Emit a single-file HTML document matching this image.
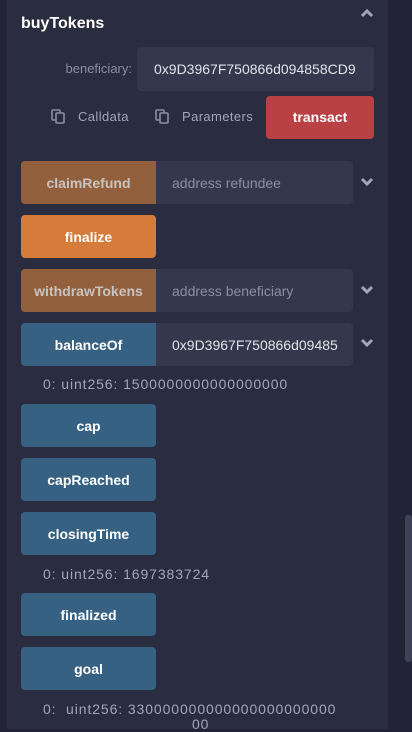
<!DOCTYPE html>
<html><head><style>
*{box-sizing:border-box;margin:0;padding:0}
body{width:412px;height:729px;overflow:hidden;background:#222336;font-family:"Liberation Sans",sans-serif;position:relative}
.panel{position:absolute;left:7px;top:0;width:381px;height:729px;background:#2a2c3f}
.a{position:absolute}
.btn{position:absolute;left:21px;width:135px;height:43px;border-radius:4px;color:#fff;font-weight:bold;font-size:14px;display:flex;align-items:center;justify-content:center}
.blue{background:#366182}
.or{background:#93603d;color:#c9c3c0;border-radius:4px 0 0 4px}
.inp{position:absolute;left:156px;width:197px;height:43px;background:#35384c;border-radius:0 4px 4px 0;color:#8a8ea6;font-size:14px;padding-left:16px;display:flex;align-items:center;overflow:hidden;white-space:nowrap}
.out{position:absolute;left:43px;color:#a2a6ba;font-size:14px;letter-spacing:0.9px}
.chev{position:absolute;left:360px;width:14px;height:14px}
</style></head><body>
<div class="panel"></div>
<div class="a" style="left:405px;top:515px;width:7px;height:147px;background:#3e4157;border-radius:3px"></div>
<div class="a" style="left:21px;top:15px;color:#fff;font-weight:bold;font-size:16px">buyTokens</div>
<svg class="chev" style="top:6px" viewBox="0 0 14 14"><path d="M2 10 L7 5 L12 10" stroke="#a2a6ba" stroke-width="3" fill="none"/></svg>
<div class="a" style="left:40px;top:61px;width:92px;text-align:right;color:#8a8ea6;font-size:13px">beneficiary:</div>
<div class="a" style="left:137px;top:47px;width:237px;height:44px;background:#35384c;border-radius:4px;color:#e0e2ea;font-size:14px;padding-left:17px;line-height:44px;overflow:hidden;white-space:nowrap">0x9D3967F750866d094858CD9</div>
<svg class="a" style="left:51px;top:109px" width="14" height="15" viewBox="0 0 14 15"><rect x="1" y="1" width="8" height="10" rx="1" stroke="#8a8ea6" stroke-width="1.6" fill="none"/><rect x="5" y="4" width="8" height="10" rx="1" stroke="#8a8ea6" stroke-width="1.6" fill="#2a2c3f"/></svg>
<div class="a" style="left:78px;top:109px;color:#a2a6ba;font-size:13px;letter-spacing:0.4px">Calldata</div>
<svg class="a" style="left:155px;top:109px" width="14" height="15" viewBox="0 0 14 15"><rect x="1" y="1" width="8" height="10" rx="1" stroke="#8a8ea6" stroke-width="1.6" fill="none"/><rect x="5" y="4" width="8" height="10" rx="1" stroke="#8a8ea6" stroke-width="1.6" fill="#2a2c3f"/></svg>
<div class="a" style="left:182px;top:109px;color:#a2a6ba;font-size:13px;letter-spacing:0.4px">Parameters</div>
<div class="a" style="left:266px;top:96px;width:108px;height:43px;background:#b94043;border-radius:4px;color:#fff;font-weight:bold;font-size:14px;line-height:43px;text-align:center">transact</div>

<div class="btn or" style="top:161px">claimRefund</div>
<div class="inp" style="top:161px">address refundee</div>
<svg class="chev" style="top:175px" viewBox="0 0 14 14"><path d="M2 4 L7 9 L12 4" stroke="#a2a6ba" stroke-width="3" fill="none"/></svg>

<div class="btn" style="top:215px;background:#d57c3a">finalize</div>

<div class="btn or" style="top:269px">withdrawTokens</div>
<div class="inp" style="top:269px">address beneficiary</div>
<svg class="chev" style="top:283px" viewBox="0 0 14 14"><path d="M2 4 L7 9 L12 4" stroke="#a2a6ba" stroke-width="3" fill="none"/></svg>

<div class="btn blue" style="top:323px;border-radius:4px 0 0 4px">balanceOf</div>
<div class="inp" style="top:323px;color:#e0e2ea">0x9D3967F750866d09485</div>
<svg class="chev" style="top:336px" viewBox="0 0 14 14"><path d="M2 4 L7 9 L12 4" stroke="#a2a6ba" stroke-width="3" fill="none"/></svg>
<div class="out" style="top:376px">0: uint256: 1500000000000000000</div>

<div class="btn blue" style="top:404px">cap</div>
<div class="btn blue" style="top:458px">capReached</div>
<div class="btn blue" style="top:512px">closingTime</div>
<div class="out" style="top:566px">0: uint256: 1697383724</div>
<div class="btn blue" style="top:593px">finalized</div>
<div class="btn blue" style="top:647px">goal</div>
<div class="out" style="top:701px">0:&nbsp; uint256: 330000000000000000000000</div>
<div class="out" style="top:716px;left:192px">00</div>
</body></html>
